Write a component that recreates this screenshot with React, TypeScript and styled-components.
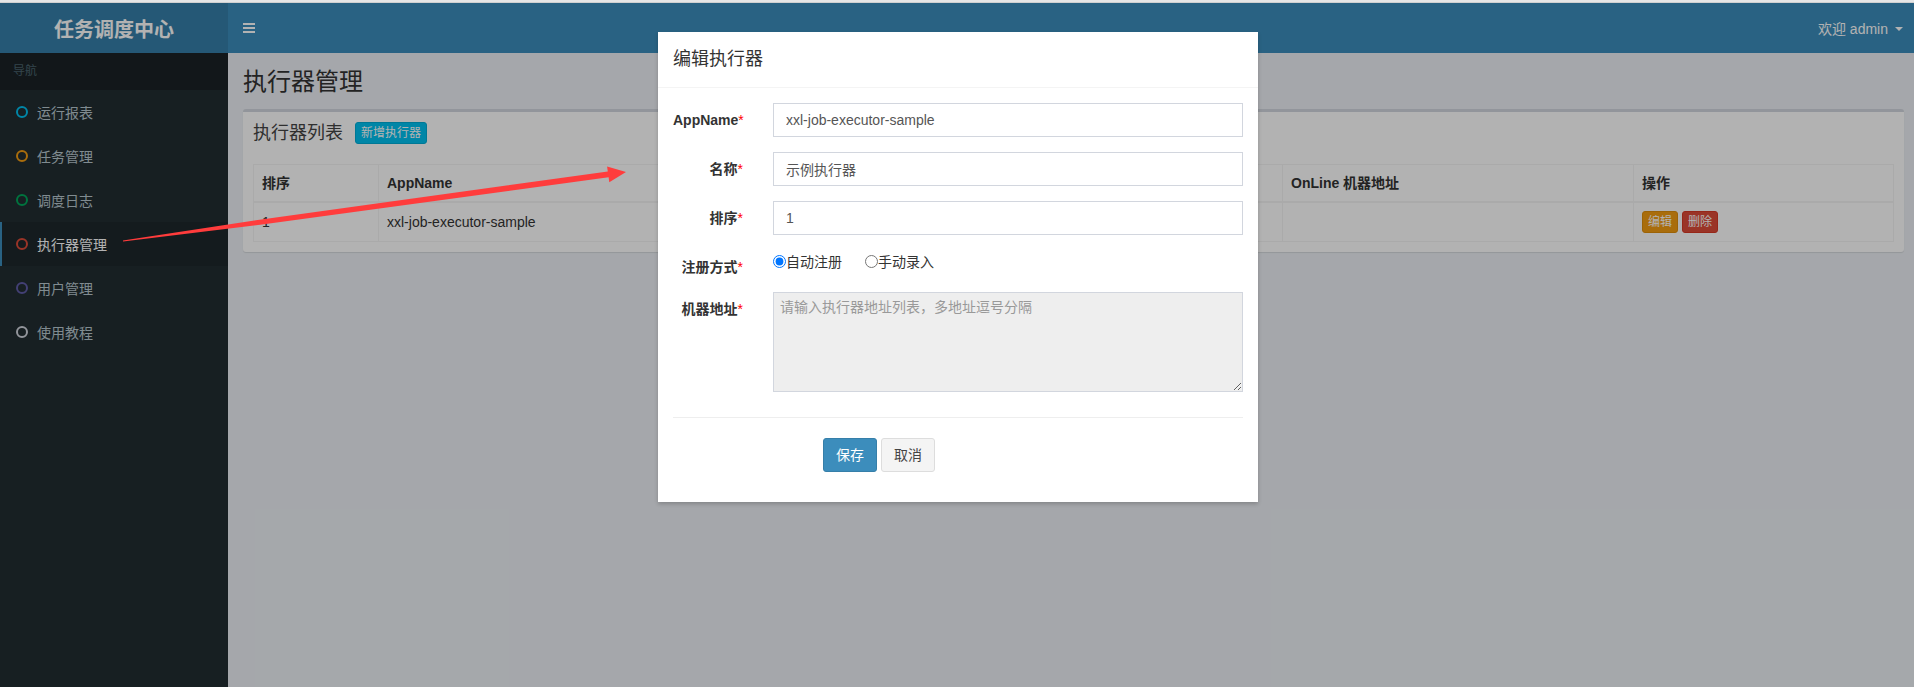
import React from "react";
import styled, { createGlobalStyle } from "styled-components";

const FONT = `"Liberation Sans", "Noto Sans CJK SC", sans-serif`;

const Global = createGlobalStyle`
  html, body { margin: 0; padding: 0; }
  body {
    font-family: ${FONT};
    font-size: 14px;
    color: #333;
    overflow: hidden;
    background: #ecf0f5;
  }
  * { box-sizing: border-box; }
`;

const Frame = styled.div`
  position: relative;
  width: 1914px;
  height: 687px;
  overflow: hidden;
  background: #ecf0f5;
`;

const TopStrip = styled.div`
  height: 3px;
  background: #e6e6e6;
  border-bottom: 1px solid #d0d0d0;
`;

const Page = styled.div`
  position: relative;
  height: 684px;
  display: flex;
  flex-direction: column;
`;

const Header = styled.header`
  display: flex;
  height: 50px;
  flex-shrink: 0;
`;

const Logo = styled.div`
  width: 228px;
  background: #367fa9;
  color: #fff;
  font-size: 20px;
  font-weight: 700;
  display: flex;
  align-items: center;
  justify-content: center;
`;

const Navbar = styled.nav`
  flex: 1;
  background: #3c8dbc;
  display: flex;
  align-items: center;
  justify-content: space-between;
  padding: 0 11px 0 15px;
  color: #fff;
`;

const UserMenu = styled.div`
  display: flex;
  align-items: center;
  gap: 7px;
  font-size: 14px;
  color: #fff;
`;

const Caret = styled.span`
  width: 0;
  height: 0;
  border-top: 4px solid #fff;
  border-left: 4px solid transparent;
  border-right: 4px solid transparent;
  margin-top: 2px;
`;

const Main = styled.div`
  display: flex;
  flex: 1;
  min-height: 0;
`;

const Sidebar = styled.aside`
  width: 228px;
  flex-shrink: 0;
  background: #222d32;
`;

const NavHeader = styled.div`
  background: #1a2226;
  color: #4b646f;
  font-size: 12px;
  line-height: 17px;
  padding: 10px 15px 10px 13px;
`;

const NavItem = styled.div<{ $active?: boolean }>`
  display: flex;
  align-items: center;
  gap: 9px;
  height: 44px;
  padding-left: ${(p) => (p.$active ? "14px" : "16px")};
  border-left: ${(p) => (p.$active ? "2px solid #3c8dbc" : "none")};
  background: ${(p) => (p.$active ? "#1e282c" : "transparent")};
  color: ${(p) => (p.$active ? "#fff" : "#b8c7ce")};
  font-size: 14px;
`;

const Ring = styled.span<{ $color: string }>`
  width: 12px;
  height: 12px;
  border-radius: 50%;
  border: 2px solid ${(p) => p.$color};
  flex-shrink: 0;
`;

const Content = styled.main`
  flex: 1;
  padding: 15px 11px 0 15px;
`;

const PageTitle = styled.h1`
  margin: 0 0 13px;
  font-size: 24px;
  font-weight: 400;
  line-height: 28px;
  color: #333;
`;

const Box = styled.section`
  background: #fff;
  border-top: 3px solid #d2d6de;
  border-radius: 3px;
  box-shadow: 0 1px 1px rgba(0, 0, 0, 0.1);
`;

const BoxHeader = styled.div`
  display: flex;
  align-items: center;
  gap: 12px;
  padding: 10px;
`;

const BoxTitle = styled.h3`
  margin: 0;
  font-size: 18px;
  font-weight: 400;
  line-height: 20px;
  color: #444;
`;

const XS_COLORS: Record<string, [string, string]> = {
  info: ["#00c0ef", "#00acd6"],
  warning: ["#f39c12", "#e08e0b"],
  danger: ["#dd4b39", "#d73925"],
};

const XsButton = styled.button<{ $variant: "info" | "warning" | "danger" }>`
  font-family: ${FONT};
  font-size: 12px;
  line-height: 18px;
  padding: 1px 5px;
  border-radius: 3px;
  border: 1px solid ${(p) => XS_COLORS[p.$variant][1]};
  background: ${(p) => XS_COLORS[p.$variant][0]};
  color: #fff;
  cursor: pointer;
`;

const BoxBody = styled.div`
  padding: 10px;
`;

const Table = styled.table`
  width: 100%;
  border-collapse: collapse;
  table-layout: fixed;
  border: 1px solid #f4f4f4;
`;

const Th = styled.th`
  padding: 8px;
  line-height: 20px;
  text-align: left;
  font-weight: 700;
  border: 1px solid #f4f4f4;
  border-bottom-width: 2px;
  color: #333;
`;

const Td = styled.td`
  padding: 8px;
  line-height: 20px;
  border: 1px solid #f4f4f4;
  color: #333;
`;

const OpGroup = styled.div`
  display: flex;
  gap: 4px;
`;

const Backdrop = styled.div`
  position: absolute;
  inset: 0;
  background: rgba(0, 0, 0, 0.3);
  z-index: 10;
`;

const Modal = styled.div`
  position: absolute;
  top: 32px;
  left: 658px;
  width: 600px;
  background: #fff;
  box-shadow: 0 2px 4px rgba(0, 0, 0, 0.2);
  z-index: 20;
`;

const ModalHeader = styled.div`
  padding: 15px;
  border-bottom: 1px solid #f4f4f4;
`;

const ModalTitle = styled.h4`
  margin: 0;
  font-size: 18px;
  font-weight: 400;
  line-height: 25px;
  color: #333;
`;

const ModalBody = styled.div`
  padding: 15px 0;
`;

const FormRow = styled.div`
  display: grid;
  grid-template-columns: 100px 1fr;
  margin-bottom: 15px;
`;

const FieldLabel = styled.label`
  text-align: right;
  font-weight: 700;
  padding: 7px 15px 0;
  line-height: 20px;
  color: #333;
`;

const Req = styled.span`
  color: #f00;
  font-weight: 400;
`;

const Field = styled.div`
  padding: 0 15px;
`;

const TextInput = styled.input`
  width: 100%;
  height: 34px;
  padding: 6px 12px;
  border: 1px solid #d2d6de;
  border-radius: 0;
  font-family: ${FONT};
  font-size: 14px;
  color: #555;
  outline: none;
`;

const RadioGroup = styled.div`
  display: flex;
  align-items: center;
  gap: 23px;
  height: 22px;
`;

const RadioLabel = styled.label`
  display: inline-flex;
  align-items: center;
  font-size: 14px;
  color: #333;
  input {
    margin: 0;
    width: 13px;
    height: 13px;
  }
`;

const TextArea = styled.textarea`
  display: block;
  width: 100%;
  height: 100px;
  padding: 4px 6px;
  border: 1px solid #d2d6de;
  border-radius: 0;
  background: #eee;
  font-family: ${FONT};
  font-size: 14px;
  line-height: 20px;
  color: #555;
  outline: none;
  &::placeholder {
    color: #999;
  }
`;

const Divider = styled.hr`
  margin: 25px 15px 20px;
  border: 0;
  border-top: 1px solid #eee;
`;

const ButtonRow = styled.div`
  display: flex;
  gap: 4px;
  padding-left: 165px;
  margin-bottom: 15px;
`;

const Btn = styled.button<{ $primary?: boolean }>`
  height: 34px;
  padding: 6px 12px;
  font-family: ${FONT};
  font-size: 14px;
  line-height: 20px;
  border-radius: 3px;
  border: 1px solid ${(p) => (p.$primary ? "#367fa9" : "#ddd")};
  background: ${(p) => (p.$primary ? "#3c8dbc" : "#f4f4f4")};
  color: ${(p) => (p.$primary ? "#fff" : "#444")};
  cursor: pointer;
`;

const ArrowLayer = styled.svg`
  position: absolute;
  top: 0;
  left: 0;
  z-index: 30;
  pointer-events: none;
`;

const menu = [
  { label: "运行报表", color: "#00c0ef" },
  { label: "任务管理", color: "#f39c12" },
  { label: "调度日志", color: "#00a65a" },
  { label: "执行器管理", color: "#dd4b39", active: true },
  { label: "用户管理", color: "#605ca8" },
  { label: "使用教程", color: "#d2d6de" },
];

const columns = [
  { title: "排序", width: 125 },
  { title: "AppName", width: 904 },
  { title: "OnLine 机器地址", width: 351 },
  { title: "操作", width: 260 },
];

const arrowPoints = [
  [122.93, 240.5],
  [261.35, 219.42],
  [607.79, 171.43],
  [607.11, 166.47],
  [626, 172],
  [609.29, 182.33],
  [608.61, 177.37],
  [262.05, 224.58],
  [123.07, 241.5],
]
  .map((p) => p.join(","))
  .join(" ");

export default function App() {
  return (
    <Frame>
      <Global />
      <TopStrip />
      <Page>
        <Header>
          <Logo>任务调度中心</Logo>
          <Navbar>
            <svg width="12" height="10" viewBox="0 0 12 10">
              <rect x="0" y="0" width="12" height="2" fill="#fff" />
              <rect x="0" y="4" width="12" height="2" fill="#fff" />
              <rect x="0" y="8" width="12" height="2" fill="#fff" />
            </svg>
            <UserMenu>
              <span>欢迎 admin</span>
              <Caret />
            </UserMenu>
          </Navbar>
        </Header>
        <Main>
          <Sidebar>
            <NavHeader>导航</NavHeader>
            {menu.map((m) => (
              <NavItem key={m.label} $active={m.active}>
                <Ring $color={m.color} />
                <span>{m.label}</span>
              </NavItem>
            ))}
          </Sidebar>
          <Content>
            <PageTitle>执行器管理</PageTitle>
            <Box>
              <BoxHeader>
                <BoxTitle>执行器列表</BoxTitle>
                <XsButton $variant="info">新增执行器</XsButton>
              </BoxHeader>
              <BoxBody>
                <Table>
                  <colgroup>
                    {columns.map((c) => (
                      <col key={c.title} style={{ width: c.width }} />
                    ))}
                  </colgroup>
                  <thead>
                    <tr>
                      {columns.map((c) => (
                        <Th key={c.title}>{c.title}</Th>
                      ))}
                    </tr>
                  </thead>
                  <tbody>
                    <tr>
                      <Td>1</Td>
                      <Td>xxl-job-executor-sample</Td>
                      <Td></Td>
                      <Td>
                        <OpGroup>
                          <XsButton $variant="warning">编辑</XsButton>
                          <XsButton $variant="danger">删除</XsButton>
                        </OpGroup>
                      </Td>
                    </tr>
                  </tbody>
                </Table>
              </BoxBody>
            </Box>
          </Content>
        </Main>
        <Backdrop />
      </Page>

      <Modal>
        <ModalHeader>
          <ModalTitle>编辑执行器</ModalTitle>
        </ModalHeader>
        <ModalBody>
          <FormRow>
            <FieldLabel>
              AppName<Req>*</Req>
            </FieldLabel>
            <Field>
              <TextInput defaultValue="xxl-job-executor-sample" />
            </Field>
          </FormRow>
          <FormRow>
            <FieldLabel>
              名称<Req>*</Req>
            </FieldLabel>
            <Field>
              <TextInput defaultValue="示例执行器" />
            </Field>
          </FormRow>
          <FormRow>
            <FieldLabel>
              排序<Req>*</Req>
            </FieldLabel>
            <Field>
              <TextInput defaultValue="1" />
            </Field>
          </FormRow>
          <FormRow>
            <FieldLabel>
              注册方式<Req>*</Req>
            </FieldLabel>
            <Field>
              <RadioGroup>
                <RadioLabel>
                  <input type="radio" name="addressType" defaultChecked />
                  自动注册
                </RadioLabel>
                <RadioLabel>
                  <input type="radio" name="addressType" />
                  手动录入
                </RadioLabel>
              </RadioGroup>
            </Field>
          </FormRow>
          <FormRow>
            <FieldLabel>
              机器地址<Req>*</Req>
            </FieldLabel>
            <Field>
              <TextArea
                readOnly
                placeholder="请输入执行器地址列表，多地址逗号分隔"
              />
            </Field>
          </FormRow>
          <Divider />
          <ButtonRow>
            <Btn $primary>保存</Btn>
            <Btn>取消</Btn>
          </ButtonRow>
        </ModalBody>
      </Modal>

      <ArrowLayer width="1914" height="687" viewBox="0 0 1914 687">
        <polygon points={arrowPoints} fill="#ff3c3c" />
      </ArrowLayer>
    </Frame>
  );
}
